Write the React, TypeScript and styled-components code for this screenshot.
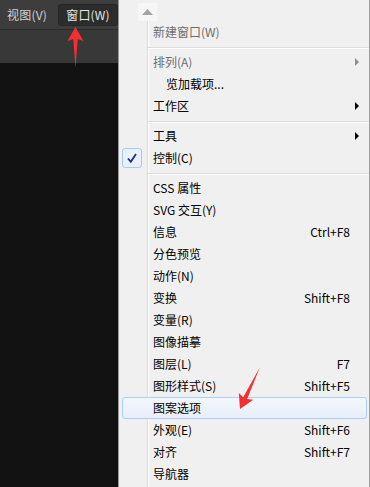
import React, { ReactElement } from 'react';
import styled, { createGlobalStyle } from 'styled-components';

const GlobalStyle = createGlobalStyle`
  html, body {
    margin: 0;
    padding: 0;
    background: #121212;
  }
`;

const FONT = `'Noto Sans CJK SC', 'Microsoft YaHei', 'Liberation Sans', sans-serif`;

const Page = styled.div`
  position: relative;
  width: 370px;
  height: 487px;
  overflow: hidden;
  font-family: ${FONT};
  font-size: 12px;
`;

const Workspace = styled.div`
  display: flex;
  flex-direction: column;
  height: 100%;
`;

const MenuBar = styled.div`
  display: flex;
  align-items: center;
  gap: 10px;
  height: 29px;
  padding-left: 6px;
  background: #3d3d3d;
  border-bottom: 1px solid #2a2a2a;
`;

const BarItem = styled.div<{ $open?: boolean }>`
  display: flex;
  align-items: center;
  justify-content: center;
  box-sizing: border-box;
  height: 22px;
  line-height: 20px;
  width: ${p => (p.$open ? '60px' : 'auto')};
  letter-spacing: 0.2px;
  color: ${p => (p.$open ? '#e6e6e6' : '#d2d2d2')};
  background: ${p => (p.$open ? '#2c2c2c' : 'transparent')};
  border: 1px solid ${p => (p.$open ? '#262626' : 'transparent')};
  border-radius: 3px;
`;

const ToolStrip = styled.div`
  height: 33px;
  background: #383838;
`;

const Canvas = styled.div`
  flex: 1;
  background: #121212;
`;

const Menu = styled.div`
  position: absolute;
  top: 0;
  left: 118px;
  width: 250px;
  bottom: 0;
  background: #f0f0f0;
  border-left: 1px solid #979797;
  border-right: 1px solid #a0a0a0;
  display: flex;
  flex-direction: column;
  &::before {
    content: '';
    position: absolute;
    top: 21px;
    bottom: 0;
    left: 28px;
    width: 1px;
    background: #dcdcdc;
    box-shadow: 1px 0 0 #ffffff;
  }
`;

const ScrollUp = styled.div`
  height: 21px;
  padding-top: 3px;
  box-sizing: border-box;
  padding-left: 19px;
`;

const ScrollBox = styled.div`
  width: 19px;
  height: 18px;
  background: #f6f6f6;
  display: flex;
  align-items: center;
  justify-content: center;
`;

const Item = styled.div<{ $disabled?: boolean; $hover?: boolean; $indent?: number }>`
  position: relative;
  display: flex;
  align-items: center;
  height: 22px;
  box-sizing: border-box;
  margin: 0 2px 0 3px;
  padding-left: ${p => 30 + (p.$indent || 0)}px;
  line-height: 20px;
  white-space: nowrap;
  color: ${p => (p.$disabled ? '#6d6d6d' : '#000000')};
  border: 1px solid ${p => (p.$hover ? '#aecff5' : 'transparent')};
  border-radius: 3px;
  background: ${p =>
    p.$hover ? 'linear-gradient(#f3f7fc, #e6eef9)' : 'transparent'};
`;

const Label = styled.span`
  flex: 1;
`;

const Shortcut = styled.span`
  color: #000000;
`;

const SubCol = styled.span`
  width: 16px;
  display: flex;
  align-items: center;
  padding-left: 5px;
  box-sizing: border-box;
`;

const SubArrow = styled.span<{ $disabled?: boolean }>`
  width: 0;
  height: 0;
  border-top: 4px solid transparent;
  border-bottom: 4px solid transparent;
  border-left: 4px solid ${p => (p.$disabled ? '#8d8d8d' : '#000000')};
`;

const CheckBox = styled.div`
  position: absolute;
  top: 0;
  left: -1px;
  width: 20px;
  height: 20px;
  box-sizing: border-box;
  border: 1px solid #a9c8ef;
  border-radius: 3px;
  background: #e8f0fb;
  display: flex;
  align-items: center;
  justify-content: center;
`;

const Separator = styled.div`
  height: 8px;
  margin-left: 29px;
  position: relative;
  &::after {
    content: '';
    position: absolute;
    top: 4px;
    left: 0;
    right: 0;
    height: 1px;
    background: #dcdcdc;
    box-shadow: 0 1px 0 #ffffff;
  }
`;

const Overlay = styled.svg`
  position: absolute;
  top: 0;
  left: 0;
  pointer-events: none;
`;

type Entry =
  | { sep: true }
  | {
      sep?: false;
      label: string;
      shortcut?: string;
      sub?: boolean;
      disabled?: boolean;
      checked?: boolean;
      hover?: boolean;
      indent?: number;
    };

const entries: Entry[] = [
  { label: '新建窗口(W)', disabled: true },
  { sep: true },
  { label: '排列(A)', disabled: true, sub: true },
  { label: '览加载项...', indent: 13 },
  { label: '工作区', sub: true },
  { sep: true },
  { label: '工具', sub: true },
  { label: '控制(C)', checked: true },
  { sep: true },
  { label: 'CSS 属性' },
  { label: 'SVG 交互(Y)' },
  { label: '信息', shortcut: 'Ctrl+F8' },
  { label: '分色预览' },
  { label: '动作(N)' },
  { label: '变换', shortcut: 'Shift+F8' },
  { label: '变量(R)' },
  { label: '图像描摹' },
  { label: '图层(L)', shortcut: 'F7' },
  { label: '图形样式(S)', shortcut: 'Shift+F5' },
  { label: '图案选项', hover: true },
  { label: '外观(E)', shortcut: 'Shift+F6' },
  { label: '对齐', shortcut: 'Shift+F7' },
  { label: '导航器' },
];

// red pointer, tip at origin, tail pointing down the y axis
const RedArrow = ({ x, y, angle, length }: { x: number; y: number; angle: number; length: number }): ReactElement => (
  <g transform={`translate(${x} ${y}) rotate(${angle})`}>
    <polygon
      points={`0,0 8,14 2.2,12 0,${length} -2.2,12 -8,14`}
      fill="#f23030"
    />
  </g>
);

const App = (): ReactElement => {
  return (
    <Page>
      <GlobalStyle />
      <Workspace>
        <MenuBar>
          <BarItem>视图(V)</BarItem>
          <BarItem $open>窗口(W)</BarItem>
        </MenuBar>
        <ToolStrip />
        <Canvas />
      </Workspace>

      <Menu>
        <ScrollUp>
          <ScrollBox>
            <svg width="11" height="6" viewBox="0 0 11 6">
              <polygon points="0,6 5.5,0 11,6" fill="#a3a3a3" />
            </svg>
          </ScrollBox>
        </ScrollUp>
        {entries.map((e, i) =>
          e.sep ? (
            <Separator key={i} />
          ) : (
            <Item key={i} $disabled={e.disabled} $hover={e.hover} $indent={e.indent}>
              {e.checked && (
                <CheckBox>
                  <svg width="12" height="12" viewBox="0 0 12 12">
                    <path
                      d="M2 6.5 L4.8 9.8 L10 2"
                      fill="none"
                      stroke="#1e2b8e"
                      strokeWidth="1.8"
                    />
                  </svg>
                </CheckBox>
              )}
              <Label>{e.label}</Label>
              {e.shortcut && <Shortcut>{e.shortcut}</Shortcut>}
              <SubCol>{e.sub && <SubArrow $disabled={e.disabled} />}</SubCol>
            </Item>
          ),
        )}
      </Menu>

      <Overlay width="370" height="487" viewBox="0 0 370 487">
        <RedArrow x={75.5} y={27} angle={0} length={41} />
        <RedArrow x={240} y={409} angle={205.5} length={46} />
      </Overlay>
    </Page>
  );
};

export default App;
